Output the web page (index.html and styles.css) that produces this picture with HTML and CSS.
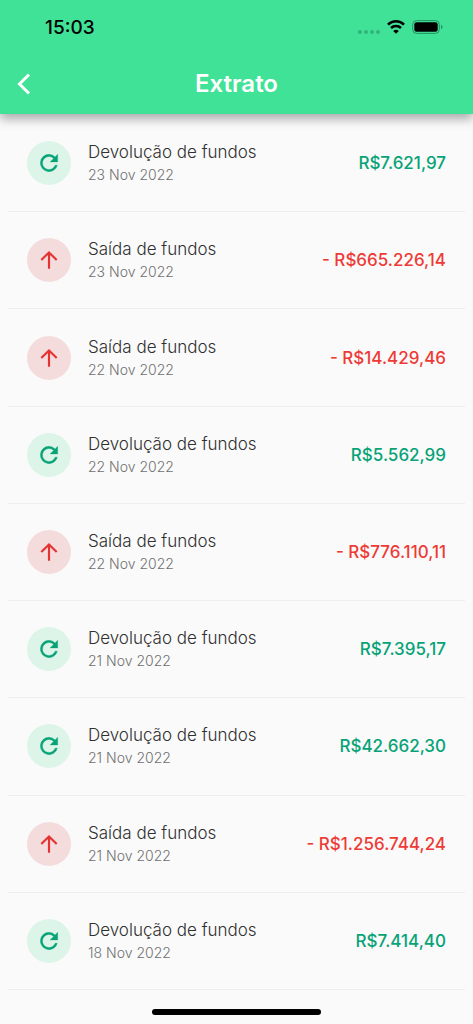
FILE: index.html
```html
<!DOCTYPE html>
<html lang="pt-BR">
<head>
<meta charset="utf-8">
<meta name="viewport" content="width=device-width, initial-scale=1">
<title>Extrato</title>
<link rel="stylesheet" href="styles.css">
</head>
<body>
<svg class="defs" aria-hidden="true">
  <symbol id="refund" viewBox="0 0 24 24"><path d="M17.65 6.35A7.96 7.96 0 0 0 12 4a8 8 0 1 0 7.73 10h-2.08A6 6 0 1 1 12 6c1.66 0 3.14.69 4.22 1.78L13 11h7V4z" fill="currentColor" stroke="currentColor" stroke-width=".3"/></symbol>
  <symbol id="up" viewBox="0 0 24 24"><path d="M12 20V5M4.900 12.100 12 5l7.100 7.100" fill="none" stroke="currentColor" stroke-width="2"/></symbol>
</svg>
<header class="header">
  <div class="status">
    <span class="time">15:03</span>
    <span class="indicators">
      <svg width="22" height="14" viewBox="0 0 22 14" fill="#32b37b"><circle cx="2" cy="12" r="2"/><circle cx="8" cy="12" r="2"/><circle cx="14" cy="12" r="2"/><circle cx="20" cy="12" r="2"/></svg>
      <svg width="18" height="14" viewBox="0 0 18 14"><path d="M1 4.600a11.500 11.500 0 0 1 16 0M4 8a7.200 7.200 0 0 1 10 0" fill="none" stroke="#000" stroke-width="2.500"/><path d="M6.200 11a4.200 4.200 0 0 1 5.600 0L9 13.800z"/></svg>
      <svg width="31" height="14" viewBox="0 0 31 14"><rect x=".7" y=".6" width="26.600" height="12.800" rx="3.800" fill="none" stroke="#269264"/><rect x="2.300" y="2.200" width="23.400" height="9.600" rx="2.300"/><path d="M29 4.800q1.600.7 1.600 2.200T29 9.200z" fill="#269264"/></svg>
    </span>
  </div>
  <div class="bar">
    <button class="back" type="button" aria-label="Voltar"><svg width="14" height="22" viewBox="0 0 14 22"><path d="M12 1.500 2.500 11l9.500 9.500" fill="none" stroke="#fff" stroke-width="3"/></svg></button>
    <h1 class="title">Extrato</h1>
  </div>
</header>
<main class="main">
  <ul class="list">
    <li class="row in"><span class="badge"><svg class="icon"><use href="#refund"/></svg></span><div class="info"><span class="name">Devolução de fundos</span><time class="date">23 Nov 2022</time></div><span class="amount">R$7.621,97</span></li>
    <li class="row out"><span class="badge"><svg class="icon"><use href="#up"/></svg></span><div class="info"><span class="name">Saída de fundos</span><time class="date">23 Nov 2022</time></div><span class="amount">- R$665.226,14</span></li>
    <li class="row out"><span class="badge"><svg class="icon"><use href="#up"/></svg></span><div class="info"><span class="name">Saída de fundos</span><time class="date">22 Nov 2022</time></div><span class="amount">- R$14.429,46</span></li>
    <li class="row in"><span class="badge"><svg class="icon"><use href="#refund"/></svg></span><div class="info"><span class="name">Devolução de fundos</span><time class="date">22 Nov 2022</time></div><span class="amount">R$5.562,99</span></li>
    <li class="row out"><span class="badge"><svg class="icon"><use href="#up"/></svg></span><div class="info"><span class="name">Saída de fundos</span><time class="date">22 Nov 2022</time></div><span class="amount">- R$776.110,11</span></li>
    <li class="row in"><span class="badge"><svg class="icon"><use href="#refund"/></svg></span><div class="info"><span class="name">Devolução de fundos</span><time class="date">21 Nov 2022</time></div><span class="amount">R$7.395,17</span></li>
    <li class="row in"><span class="badge"><svg class="icon"><use href="#refund"/></svg></span><div class="info"><span class="name">Devolução de fundos</span><time class="date">21 Nov 2022</time></div><span class="amount">R$42.662,30</span></li>
    <li class="row out"><span class="badge"><svg class="icon"><use href="#up"/></svg></span><div class="info"><span class="name">Saída de fundos</span><time class="date">21 Nov 2022</time></div><span class="amount">- R$1.256.744,24</span></li>
    <li class="row in"><span class="badge"><svg class="icon"><use href="#refund"/></svg></span><div class="info"><span class="name">Devolução de fundos</span><time class="date">18 Nov 2022</time></div><span class="amount">R$7.414,40</span></li>
  </ul>
</main>
<footer class="home"><span class="handle"></span></footer>
</body>
</html>
```
FILE: styles.css
```css
* { box-sizing: border-box; }
body {
  margin: 0;
  min-height: 100vh;
  display: flex;
  flex-direction: column;
  background: #fafafa;
  color: #303030;
  font-family: Inter, "Liberation Sans", sans-serif;
}
.defs { display: none; }
.header {
  background: #40e298;
  box-shadow: 0 5px 10px rgba(0, 0, 0, .32);
}
.status {
  height: 54px;
  padding: 0 30px 0 45px;
  display: flex;
  align-items: center;
  justify-content: space-between;
}
.time { color: #000; font-size: 19px; font-weight: 500; }
.indicators { display: flex; align-items: center; gap: 7px; }
.bar {
  height: 60px;
  padding: 0 17px;
  display: grid;
  grid-template-columns: 24px 1fr 24px;
  align-items: center;
}
.back { display: flex; padding: 0; border: 0; background: none; cursor: pointer; }
.title {
  margin: 0;
  color: #fff;
  font-size: 24px;
  font-weight: 600;
  line-height: 28px;
  text-align: center;
}
.main { flex: 1; display: flex; }
.list {
  flex: 1;
  margin: 0;
  padding: 1px 8px 0;
  list-style: none;
  display: flex;
  flex-direction: column;
}
.row {
  flex: 1;
  display: flex;
  align-items: center;
  padding: 0 19px;
  border-bottom: 1px solid #eee;
}
.badge {
  width: 44px;
  height: 44px;
  margin-right: 17px;
  border-radius: 50%;
  display: flex;
  align-items: center;
  justify-content: center;
}
.icon { width: 26px; height: 26px; }
.in .badge { background: #dcf5e8; color: #07a377; }
.out .badge { background: #f4dcdc; color: #e53333; }
.info { flex: 1; display: flex; flex-direction: column; }
.name { font-size: 17px; font-weight: 300; line-height: 24px; }
.date { font-size: 14px; font-weight: 300; line-height: 22px; color: #707070; }
.amount { font-size: 17px; font-weight: 500; white-space: nowrap; }
.in .amount { color: #07a377; }
.out .amount { color: #ee3a36; }
.home {
  height: 34px;
  display: flex;
  justify-content: center;
  align-items: flex-end;
  padding-bottom: 9px;
}
.handle { width: 169px; height: 6px; border-radius: 3px; background: #000; }
```
